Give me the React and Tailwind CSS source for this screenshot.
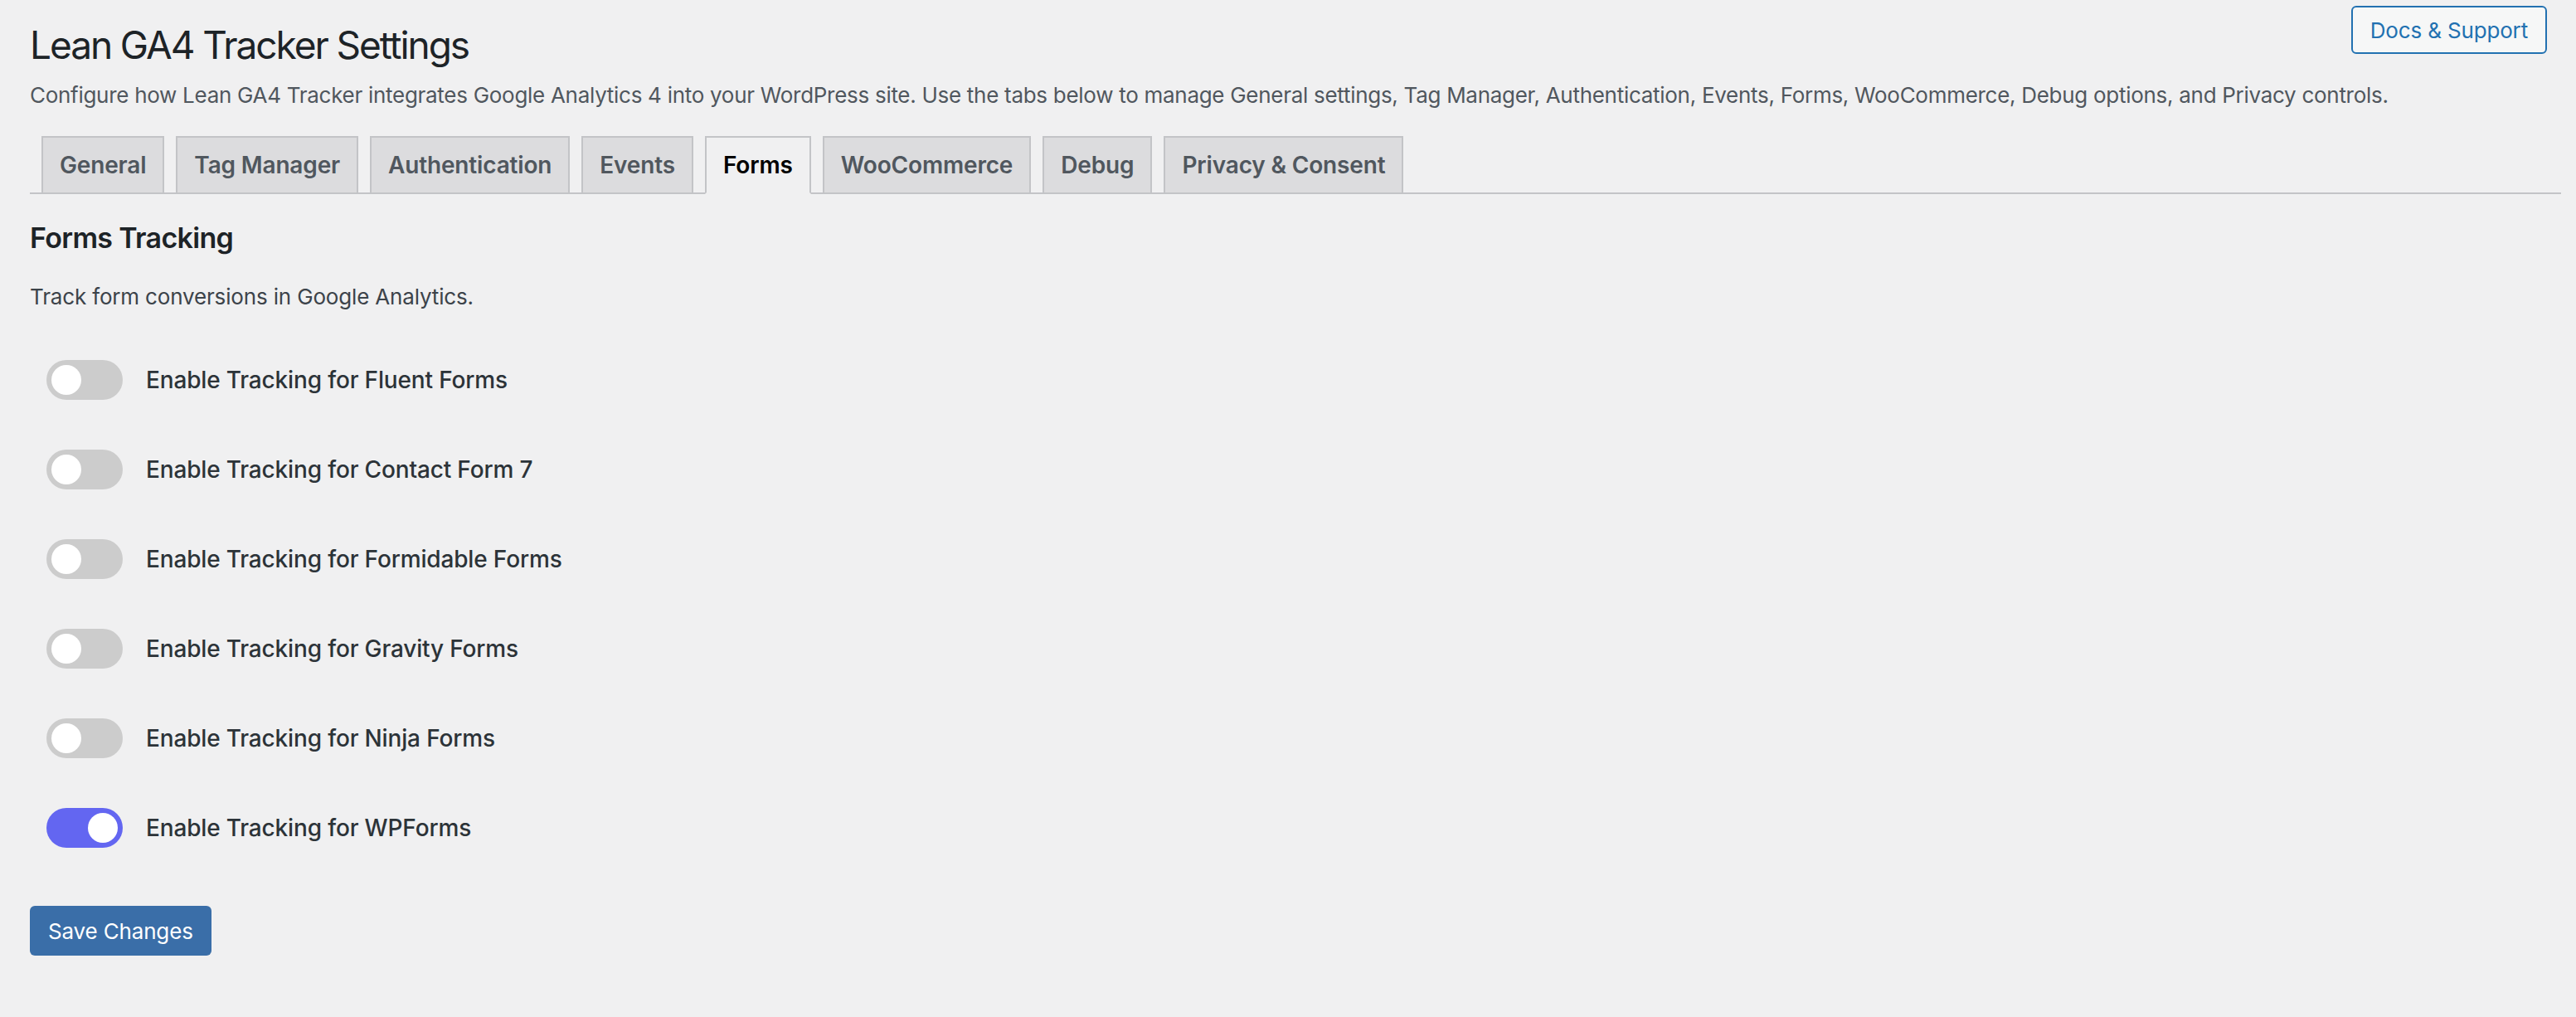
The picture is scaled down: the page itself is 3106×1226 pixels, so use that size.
import { useState } from "react";

const tabs = [
  "General",
  "Tag Manager",
  "Authentication",
  "Events",
  "Forms",
  "WooCommerce",
  "Debug",
  "Privacy & Consent",
];

const formOptions = [
  { id: "fluent", label: "Enable Tracking for Fluent Forms", on: false },
  { id: "cf7", label: "Enable Tracking for Contact Form 7", on: false },
  { id: "formidable", label: "Enable Tracking for Formidable Forms", on: false },
  { id: "gravity", label: "Enable Tracking for Gravity Forms", on: false },
  { id: "ninja", label: "Enable Tracking for Ninja Forms", on: false },
  { id: "wpforms", label: "Enable Tracking for WPForms", on: true },
];

function Toggle({ checked, onChange }) {
  return (
    <button
      type="button"
      onClick={onChange}
      className={`relative h-[48px] w-[92px] shrink-0 rounded-full ${
        checked ? "bg-[#6366f1]" : "bg-[#cccccc]"
      }`}>
      <span
        className={`absolute top-[6px] h-[36px] w-[36px] rounded-full bg-white ${
          checked ? "left-[50px]" : "left-[6px]"
        }`}
      />
    </button>
  );
}

export default function App() {
  const [active, setActive] = useState("Forms");
  const [options, setOptions] = useState(formOptions);

  const flip = (id) =>
    setOptions((prev) =>
      prev.map((o) => (o.id === id ? { ...o, on: !o.on } : o))
    );

  return (
    <div className="min-h-screen bg-[#f0f0f1] font-['Inter','Liberation_Sans',sans-serif] tracking-[-0.01em] text-[#1d2327]">
      <div className="pl-[36px] pr-[18px] pb-[40px]">
        {/* Header */}
        <div className="flex items-start justify-between">
          <h1 className="pt-[24px] text-[46px] font-normal leading-[60px] tracking-[-0.045em] text-[#1d2327]">
            Lean GA4 Tracker Settings
          </h1>
          <a
            href="#"
            className="mr-[17px] mt-[7px] flex h-[58px] items-center rounded-[6px] border-2 border-[#2271b1] bg-[#f6f7f7] px-[21px] text-[26px] text-[#2271b1]">
            Docs &amp; Support
          </a>
        </div>
        <p className="mt-[13px] text-[26px] leading-[36px] tracking-[-0.011em] text-[#50575e]">
          Configure how Lean GA4 Tracker integrates Google Analytics 4 into
          your WordPress site. Use the tabs below to manage General settings,
          Tag Manager, Authentication, Events, Forms, WooCommerce, Debug
          options, and Privacy controls.
        </p>

        {/* Tabs */}
        <nav className="mt-[31px] flex items-end border-b-2 border-[#c3c4c7]">
          {tabs.map((t) => (
            <button
              key={t}
              type="button"
              onClick={() => setActive(t)}
              className={`-mb-[2px] ml-[14px] border-2 px-[20px] py-[10px] text-[28px] font-semibold leading-[46px] ${
                active === t
                  ? "border-[#c3c4c7] border-b-[#f0f0f1] bg-[#f0f0f1] text-black"
                  : "border-[#c3c4c7] bg-[#dcdcde] text-[#50575e]"
              }`}>
              {t}
            </button>
          ))}
        </nav>

        {/* Section */}
        <h2 className="mt-[31px] text-[34px] font-semibold leading-[44px] tracking-[-0.02em] text-[#1d2327]">
          Forms Tracking
        </h2>
        <p className="mt-[31px] text-[26px] leading-[36px] text-[#3c434a]">
          Track form conversions in Google Analytics.
        </p>

        <div className="mt-[58px] flex flex-col gap-[60px] pl-[20px]">
          {options.map((o) => (
            <div key={o.id} className="flex h-[48px] items-center gap-[28px]">
              <Toggle checked={o.on} onChange={() => flip(o.id)} />
              <span className="text-[28px] font-medium text-[#2c3338]">
                {o.label}
              </span>
            </div>
          ))}
        </div>

        <button
          type="button"
          className="mt-[70px] h-[60px] rounded-[6px] bg-[#3a6ea8] px-[22px] text-[26px] text-white">
          Save Changes
        </button>
      </div>
    </div>
  );
}
